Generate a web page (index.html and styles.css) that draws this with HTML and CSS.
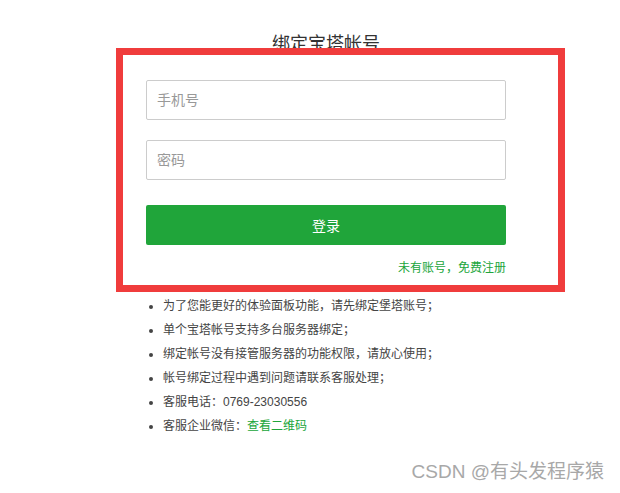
FILE: index.html
```html
<!DOCTYPE html>
<html>
<head>
    <title>绑定宝塔帐号</title>
    <meta charset="UTF-8">
    <link rel="stylesheet" href="styles.css">
</head>
<body>
    <div class="page">
        <div class="bind">
            <h2 class="bind-title">绑定宝塔帐号</h2>

            <div class="form">
                <input class="field" type="text" placeholder="手机号">
                <input class="field" type="password" placeholder="密码">
                <button class="login-btn">登录</button>
                <div class="register"><a href="#">未有账号，免费注册</a></div>
            </div>

            <ul class="tips">
                <li>为了您能更好的体验面板功能，请先绑定堡塔账号；</li>
                <li>单个宝塔帐号支持多台服务器绑定；</li>
                <li>绑定帐号没有接管服务器的功能权限，请放心使用；</li>
                <li>帐号绑定过程中遇到问题请联系客服处理；</li>
                <li>客服电话：0769-23030556</li>
                <li>客服企业微信：<a href="#">查看二维码</a></li>
            </ul>
        </div>

        <!-- annotation box drawn over the form -->
        <div class="highlight"></div>

        <div class="watermark">CSDN @有头发程序猿</div>
    </div>
</body>
</html>
```

FILE: styles.css
```css
body {
    margin: 0;
    background: #ffffff;
    font-family: 'Liberation Sans', 'Noto Sans CJK SC', sans-serif;
    color: #555;
}

.page {
    position: relative;
    width: 620px;
    height: 493px;
    overflow: hidden;
}

.bind {
    width: 360px;
    margin-left: 146px;
    padding-top: 32px;
}

.bind-title {
    margin: 0;
    text-align: center;
    font-size: 18px;
    line-height: 24px;
    font-weight: normal;
    color: #333;
}

.form {
    display: flex;
    flex-direction: column;
    margin-top: 24px;
}

.field {
    box-sizing: border-box;
    height: 40px;
    padding: 0 10px;
    border: 1px solid #ccc;
    border-radius: 2px;
    font-family: inherit;
    font-size: 14px;
    color: #555;
    outline: none;
}

.field + .field {
    margin-top: 20px;
}

.field::placeholder {
    color: #999;
}

.login-btn {
    height: 40px;
    margin-top: 25px;
    border: none;
    border-radius: 2px;
    background: #20a53a;
    color: #fff;
    font-family: inherit;
    font-size: 14px;
    cursor: pointer;
}

.register {
    margin-top: 14px;
    text-align: right;
    font-size: 12px;
    line-height: 18px;
}

.register a,
.tips a {
    color: #20a53a;
    text-decoration: none;
}

.tips {
    margin: 17px 0 0;
    padding-left: 17px;
    font-size: 12px;
    line-height: 24px;
    color: #444;
}

.highlight {
    position: absolute;
    left: 116px;
    top: 48px;
    width: 435px;
    height: 230px;
    border: 7px solid #f03c3c;
}

.watermark {
    position: absolute;
    right: 16px;
    top: 459px;
    font-size: 19px;
    line-height: 26px;
    color: #a8a8a8;
}
```
